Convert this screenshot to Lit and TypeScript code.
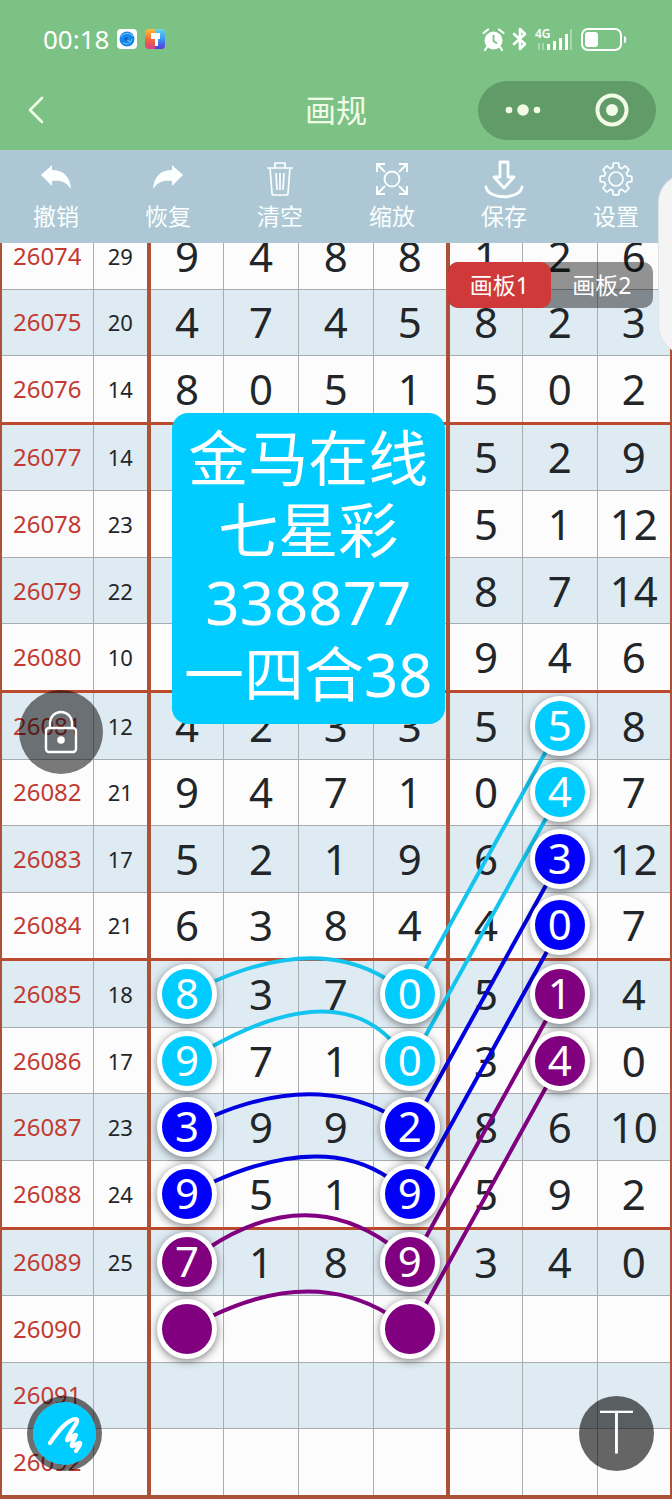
import { LitElement, html, svg, css, nothing } from "lit";
import { customElement, property, state } from "lit/decorators.js";
import { classMap } from "lit/directives/class-map.js";

type Tone = "cyan" | "blue" | "purple";

interface Draw {
  issue: string;
  sum: string;
  digits: string[];
  marks?: Record<number, Tone>;
}

const row = (issue: number, sum: string, digits: string, marks?: Record<number, Tone>): Draw => ({
  issue: String(issue),
  sum,
  digits: digits ? digits.split(" ").map((t) => (t === "-" ? "" : t)) : ["", "", "", "", "", "", ""],
  marks,
});

const DRAWS: Draw[] = [
  row(26074, "29", "9 4 8 8 1 2 6"),
  row(26075, "20", "4 7 4 5 8 2 3"),
  row(26076, "14", "8 0 5 1 5 0 2"),
  row(26077, "14", "- - - - 5 2 9"),
  row(26078, "23", "- - - - 5 1 12"),
  row(26079, "22", "- - - - 8 7 14"),
  row(26080, "10", "- - - - 9 4 6"),
  row(26081, "12", "4 2 3 3 5 5 8", { 5: "cyan" }),
  row(26082, "21", "9 4 7 1 0 4 7", { 5: "cyan" }),
  row(26083, "17", "5 2 1 9 6 3 12", { 5: "blue" }),
  row(26084, "21", "6 3 8 4 4 0 7", { 5: "blue" }),
  row(26085, "18", "8 3 7 0 5 1 4", { 0: "cyan", 3: "cyan", 5: "purple" }),
  row(26086, "17", "9 7 1 0 3 4 0", { 0: "cyan", 3: "cyan", 5: "purple" }),
  row(26087, "23", "3 9 9 2 8 6 10", { 0: "blue", 3: "blue" }),
  row(26088, "24", "9 5 1 9 5 9 2", { 0: "blue", 3: "blue" }),
  row(26089, "25", "7 1 8 9 3 4 0", { 0: "purple", 3: "purple" }),
  row(26090, "", "", { 0: "purple", 3: "purple" }),
  row(26091, "", ""),
  row(26092, "", ""),
];

const STROKES: { tone: Tone; d: string }[] = [
  { tone: "cyan", d: "M560 483L411 752" },
  { tone: "cyan", d: "M560 550L411 819" },
  { tone: "blue", d: "M560 617L411 886" },
  { tone: "blue", d: "M560 685L411 954" },
  { tone: "purple", d: "M560 752L411 1021" },
  { tone: "purple", d: "M560 819L411 1088" },
  { tone: "cyan", d: "M215 738Q316 694 385 735" },
  { tone: "cyan", d: "M213 803Q333 737 391 797" },
  { tone: "blue", d: "M213 873Q312 831 387 870" },
  { tone: "blue", d: "M213 939Q323 890 389 935" },
  { tone: "purple", d: "M210 1004Q306 942 389 1001" },
  { tone: "purple", d: "M212 1073Q312 1025 388 1071" },
];

const gearPath = (() => {
  const pts: string[] = [];
  for (let i = 0; i < 8; i++) {
    const base = (i * Math.PI) / 4;
    for (const [a, r] of [[-0.27, 12], [-0.17, 16], [0.17, 16], [0.27, 12]]) {
      pts.push(`${(17 + r * Math.sin(base + a)).toFixed(1)} ${(17 - r * Math.cos(base + a)).toFixed(1)}`);
    }
  }
  return `M${pts.join("L")}Z`;
})();

const TOOLS = [
  { label: "撤销", icon: svg`<path d="M2 13L13 3V8C24 8 31 14 32 27C27 20 22 18 13 19V24Z" fill="currentColor"/>` },
  { label: "恢复", icon: svg`<path d="M32 13L21 3V8C10 8 3 14 2 27C7 20 12 18 21 19V24Z" fill="currentColor"/>` },
  {
    label: "清空",
    icon: svg`<path d="M4 6H30M12 6V1H22V6M7 6L9 31Q9 33 11 33H23Q25 33 25 31L27 6M13 11L14 28M17 11V28M21 11L20 28" fill="none" stroke="currentColor" stroke-width="1.7"/>`,
  },
  {
    label: "缩放",
    icon: svg`<circle cx="17" cy="17" r="7.5" fill="none" stroke="currentColor" stroke-width="1.9"/><path d="M2 10V2H10M2 2L10 10M24 2H32V10M32 2L24 10M2 24V32H10M2 32L10 24M24 32H32V24M32 32L24 24" fill="none" stroke="currentColor" stroke-width="1.9"/>`,
  },
  {
    label: "保存",
    icon: svg`<path d="M13 0H21V15H27L17 26L7 15H13Z" fill="none" stroke="currentColor" stroke-width="2.8" stroke-linejoin="round"/><path d="M-1 25C1 38 33 38 35 25" fill="none" stroke="currentColor" stroke-width="2.8" stroke-linecap="round"/>`,
  },
  {
    label: "设置",
    icon: svg`<path d=${gearPath} fill="none" stroke="currentColor" stroke-width="1.7" stroke-linejoin="round"/><circle cx="17" cy="17" r="7" fill="none" stroke="currentColor" stroke-width="1.7"/>`,
  },
];

@customElement("status-bar")
class StatusBar extends LitElement {
  static styles = css`
    :host {
      display: flex;
      justify-content: space-between;
      align-items: center;
      height: 78px;
      padding: 0 45px 0 43px;
      color: #fff;
    }
    .side {
      display: flex;
      align-items: center;
      gap: 8px;
    }
    .time {
      font-size: 26px;
      font-weight: 400;
      line-height: 32px;
    }
    .signal {
      display: grid;
      grid-template-columns: auto auto;
    }
    .net {
      font-size: 12px;
      font-weight: 600;
      line-height: 12px;
      grid-area: 1 / 1;
      align-self: start;
    }
    .bars {
      grid-area: 1 / 1 / 2 / 3;
    }
    svg {
      display: block;
      overflow: visible;
    }
  `;
  render() {
    return html`
      <div class="side">
        <span class="time">00:18</span>
        <svg width="20" height="20" viewBox="0 0 20 20" aria-hidden="true">
          <rect width="20" height="20" rx="4" fill="#fff" />
          <circle cx="10" cy="10" r="7.5" fill="#1687e8" />
          <path d="M4 8C7 3 13 4 16 7M6 14C10 16 14 14 15 10M8 10L14 13" fill="none" stroke="#6fd2ff" stroke-width="1" />
          <circle cx="9" cy="10" r="1.8" fill="#0a5fc4" />
        </svg>
        <svg width="20" height="20" viewBox="0 0 20 20" aria-hidden="true">
          <defs>
            <linearGradient id="warm" x1="0" y1="0" x2="0" y2="1">
              <stop offset="0" stop-color="#ffc13a" /><stop offset="0.55" stop-color="#f2643c" /><stop offset="1" stop-color="#d8408e" />
            </linearGradient>
            <linearGradient id="cool" x1="0" y1="0" x2="0" y2="1">
              <stop offset="0" stop-color="#5fd8ec" /><stop offset="0.5" stop-color="#3797f5" /><stop offset="1" stop-color="#5b35d8" />
            </linearGradient>
          </defs>
          <rect width="20" height="20" rx="4" fill="url(#warm)" />
          <path d="M10 0H16A4 4 0 0 1 20 4V16A4 4 0 0 1 16 20H10Z" fill="url(#cool)" />
          <path d="M6 4H15V10H6ZM10 10H13V17H10Z" fill="#fff" />
        </svg>
      </div>
      <div class="side">
        <svg width="23" height="23" viewBox="0 0 23 23" aria-hidden="true">
          <circle cx="11.5" cy="12.5" r="9" fill="#fff" />
          <path d="M1.5 5L6 1.500M21.5 5L17 1.500M5 19L3 22M18 19L20 22" stroke="#fff" stroke-width="2.2" stroke-linecap="round" />
          <path d="M11.5 7V13L15 15.500" fill="none" stroke="#7cc285" stroke-width="1.8" />
        </svg>
        <svg width="14" height="22" viewBox="0 0 14 22" aria-hidden="true">
          <path d="M1 6L12 16L7 21V1L12 6L1 16" fill="none" stroke="#fff" stroke-width="2.6" stroke-linejoin="round" stroke-linecap="round" />
        </svg>
        <div class="signal">
          <span class="net">4G</span>
          <svg class="bars" width="38" height="22" viewBox="0 0 38 22" aria-hidden="true">
            <path d="M12 16h3v6h-3zM18 13h3v9h-3zM24 10h3v12h-3zM30 6h3v16h-3z" fill="#fff" />
            <path d="M3 15h2v7H3zM7 15h2v7H7zM35 1h2v21h-2z" fill="#fff" opacity="0.35" />
          </svg>
        </div>
        <svg width="46" height="23" viewBox="0 0 46 23" aria-hidden="true">
          <rect x="1" y="1" width="39" height="21" rx="6" fill="none" stroke="#fff" stroke-width="2" />
          <rect x="4" y="4" width="13" height="15" rx="3" fill="#fff" />
          <path d="M43 8C46 8 46 15 43 15Z" fill="#fff" />
        </svg>
      </div>
    `;
  }
}

@customElement("nav-bar")
class NavBar extends LitElement {
  static styles = css`
    :host {
      display: grid;
      grid-template-columns: 1fr auto 1fr;
      align-items: center;
      height: 72px;
      padding: 0 16px 8px;
      box-sizing: border-box;
      color: #f2fbe6;
    }
    button {
      appearance: none;
      border: 0;
      padding: 0;
      background: none;
      color: inherit;
      display: grid;
      place-items: center;
      cursor: pointer;
    }
    .back {
      width: 40px;
      height: 48px;
    }
    .title {
      margin: 0;
      font-size: 31px;
      line-height: 40px;
      font-weight: 400;
    }
    .capsule {
      justify-self: end;
      display: grid;
      grid-template-columns: 1fr 1fr;
      width: 178px;
      height: 59px;
      border-radius: 30px;
      background: #619b68;
    }
  `;
  render() {
    return html`
      <button class="back" aria-label="返回">
        <svg width="20" height="30" viewBox="0 0 20 30"><path d="M16 3L4 15L16 27" fill="none" stroke="currentColor" stroke-width="2.6" stroke-linecap="round" stroke-linejoin="round" /></svg>
      </button>
      <h1 class="title">画规</h1>
      <div class="capsule">
        <button aria-label="更多">
          <svg width="38" height="14" viewBox="0 0 38 14"><circle cx="5" cy="7" r="3.3" fill="currentColor" /><circle cx="19" cy="7" r="5.8" fill="currentColor" /><circle cx="33" cy="7" r="3.3" fill="currentColor" /></svg>
        </button>
        <button aria-label="关闭">
          <svg width="34" height="34" viewBox="0 0 34 34"><circle cx="17" cy="17" r="14.5" fill="none" stroke="currentColor" stroke-width="4" /><circle cx="17" cy="17" r="6" fill="currentColor" /></svg>
        </button>
      </div>
    `;
  }
}

@customElement("tool-bar")
class ToolBar extends LitElement {
  static styles = css`
    :host {
      display: grid;
      grid-template-columns: repeat(6, 1fr);
      height: 93px;
      background: #adc8d4;
    }
    .tool {
      appearance: none;
      border: 0;
      padding: 12px 0 0;
      background: none;
      color: #fbffff;
      font: inherit;
      font-size: 23px;
      line-height: 32px;
      display: flex;
      flex-direction: column;
      align-items: center;
      gap: 4px;
      cursor: pointer;
    }
    .icon {
      width: 34px;
      height: 34px;
      overflow: visible;
    }
  `;
  render() {
    return TOOLS.map(
      (t) => html`<button class="tool">
        <svg class="icon" viewBox="0 0 34 34" aria-hidden="true">${t.icon}</svg>
        <span>${t.label}</span>
      </button>`
    );
  }
}

@customElement("trend-board")
class TrendBoard extends LitElement {
  @property({ attribute: false }) draws: Draw[] = DRAWS;
  @state() private board = 1;

  static styles = css`
    :host {
      position: relative;
      display: grid;
      overflow: hidden;
      padding-bottom: 1px;
      background: #fcfcfc;
    }
    .trend {
      width: calc(100% + 4px);
      margin: -21px -2px 0;
      table-layout: fixed;
      border-collapse: collapse;
      border: 4px solid #ac5238;
      border-top: 0;
    }
    .issue-col {
      width: 93px;
    }
    .sum-col {
      width: 56px;
    }
    .line {
      background: #fcfcfc;
    }
    .line.tint {
      background: #dfebf3;
    }
    th,
    td {
      padding: 0;
      height: 60px;
      text-align: center;
      vertical-align: middle;
      font-weight: 400;
      border: 1px solid #a9acae;
      color: #222629;
      white-space: nowrap;
    }
    .line.group > * {
      border-bottom: 3px solid #bc4a2c;
    }
    .issue {
      font-size: 24px;
      line-height: 32px;
      color: #c23a31;
    }
    .sum {
      font-size: 22px;
      line-height: 32px;
    }
    .line > .edge {
      border-right: 4px solid #ac5238;
    }
    .digit {
      font-size: 42px;
      line-height: 56px;
    }
    .mark {
      position: relative;
      z-index: 2;
      display: block;
      box-sizing: border-box;
      width: 60px;
      height: 60px;
      margin: 0 auto;
      border: 5px solid #fff;
      border-radius: 50%;
      line-height: 48px;
      color: #fff;
      box-shadow: 0 2px 8px rgba(0, 0, 0, 0.5);
    }
    .mark.cyan {
      background: #00ccff;
    }
    .mark.blue {
      background: #0000fb;
    }
    .mark.purple {
      background: #800080;
    }
    .strokes {
      position: absolute;
      inset: 0;
      z-index: 1;
      width: 100%;
      height: 100%;
      fill: none;
      stroke-width: 4px;
      pointer-events: none;
    }
    .strokes .cyan {
      stroke: #12c4ee;
    }
    .strokes .blue {
      stroke: #0000e0;
    }
    .strokes .purple {
      stroke: #800080;
    }
    .note {
      position: absolute;
      z-index: 3;
      top: 170px;
      left: 172px;
      padding: 9px 12px 14px;
      border-radius: 16px;
      background: #00ccff;
      color: #fff;
      font-size: 60px;
      line-height: 72px;
      text-align: center;
    }
    .note p {
      margin: 0;
    }
    button {
      appearance: none;
      border: 0;
      padding: 0;
      font: inherit;
      color: #fff;
      cursor: pointer;
    }
    .tabs {
      position: absolute;
      z-index: 3;
      top: 19px;
      right: 19px;
      display: grid;
      grid-template-columns: 1fr 1fr;
      width: 205px;
      height: 46px;
      border-radius: 10px;
      background: rgba(0, 0, 0, 0.42);
    }
    .tab {
      background: none;
      border-radius: 10px;
      font-size: 23px;
      line-height: 32px;
    }
    .tab.on {
      background: #cf3939;
    }
    .float {
      position: absolute;
      z-index: 3;
      display: grid;
      place-items: center;
      border-radius: 50%;
      background: rgba(0, 0, 0, 0.52);
    }
    .lock {
      left: 19px;
      top: 447px;
      width: 84px;
      height: 84px;
    }
    .pen {
      left: 27px;
      bottom: 29px;
      width: 75px;
      height: 75px;
      border: 6px solid rgba(0, 0, 0, 0.56);
      background: #00ccff;
      background-clip: padding-box;
    }
    .type {
      right: 18px;
      bottom: 29px;
      width: 75px;
      height: 75px;
      background: rgba(0, 0, 0, 0.6);
      font-family: "DejaVu Sans", sans-serif;
      font-size: 58px;
      font-weight: 200;
      line-height: 72px;
    }
  `;

  private cell(d: Draw, text: string, i: number) {
    const tone = d.marks?.[i];
    return html`<td class=${classMap({ digit: true, edge: i === 3 })}>
      ${tone ? html`<span class="mark ${tone}">${text}</span>` : text || nothing}
    </td>`;
  }

  render() {
    return html`
      <table class="trend" aria-label="画规">
        <colgroup>
          <col class="issue-col" /><col class="sum-col" /><col span="7" />
        </colgroup>
        <tbody>
          ${this.draws.map(
            (d, n) => html`<tr class=${classMap({ line: true, tint: n % 2 === 1, group: n % 4 === 2 && n < 16 })}>
              <th class="issue" scope="row">${d.issue}</th>
              <td class="sum edge">${d.sum}</td>
              ${d.digits.map((t, i) => this.cell(d, t, i))}
            </tr>`
          )}
        </tbody>
      </table>
      <svg class="strokes" viewBox="0 0 672 1257" preserveAspectRatio="none" aria-hidden="true">
        ${STROKES.map((s) => svg`<path class=${s.tone} d=${s.d} vector-effect="non-scaling-stroke"/>`)}
      </svg>
      <div class="note">
        <p>金马在线</p>
        <p>七星彩</p>
        <p>338877</p>
        <p>一四合38</p>
      </div>
      <div class="tabs">
        ${[1, 2].map(
          (n) => html`<button class=${classMap({ tab: true, on: this.board === n })} aria-pressed=${this.board === n} @click=${() => (this.board = n)}>画板${n}</button>`
        )}
      </div>
      <button class="float lock" aria-label="锁定">
        <svg width="34" height="44" viewBox="0 0 34 44">
          <path d="M6 18V13A11 11 0 0 1 28 13V18" fill="none" stroke="#fff" stroke-width="2.4" />
          <rect x="2" y="18" width="30" height="24" rx="3" fill="none" stroke="#fff" stroke-width="2.4" />
          <circle cx="17" cy="30" r="3.8" fill="#fff" />
        </svg>
      </button>
      <button class="float pen" aria-label="画笔">
        <svg width="36" height="38" viewBox="0 0 36 38">
          <path d="M3 28C10 18 20 4 29 4C34 5 22 17 20 25C22 27 26 19 29 20C29 22 24 28 25 31C27 32 31 27 33 28C34 29 31 33 29 36" fill="none" stroke="#fff" stroke-width="4.2" stroke-linecap="round" stroke-linejoin="round" />
        </svg>
      </button>
      <button class="float type">T</button>
    `;
  }
}

@customElement("app-root")
class AppRoot extends LitElement {
  static styles = css`
    :host {
      position: relative;
      display: flex;
      flex-direction: column;
      min-height: 100vh;
      overflow: hidden;
      background: #7cc285;
      font-family: "Noto Sans", "Noto Sans CJK SC", sans-serif;
    }
    .board {
      flex: 1;
    }
    .drawer {
      position: absolute;
      z-index: 5;
      top: 174px;
      right: -46px;
      width: 60px;
      height: 180px;
      box-sizing: border-box;
      border: 1px solid #dde1e3;
      border-radius: 28px;
      background: #f5f4f4;
    }
  `;
  render() {
    return html`
      <status-bar></status-bar>
      <nav-bar></nav-bar>
      <tool-bar></tool-bar>
      <trend-board class="board"></trend-board>
      <div class="drawer"></div>
    `;
  }
}
